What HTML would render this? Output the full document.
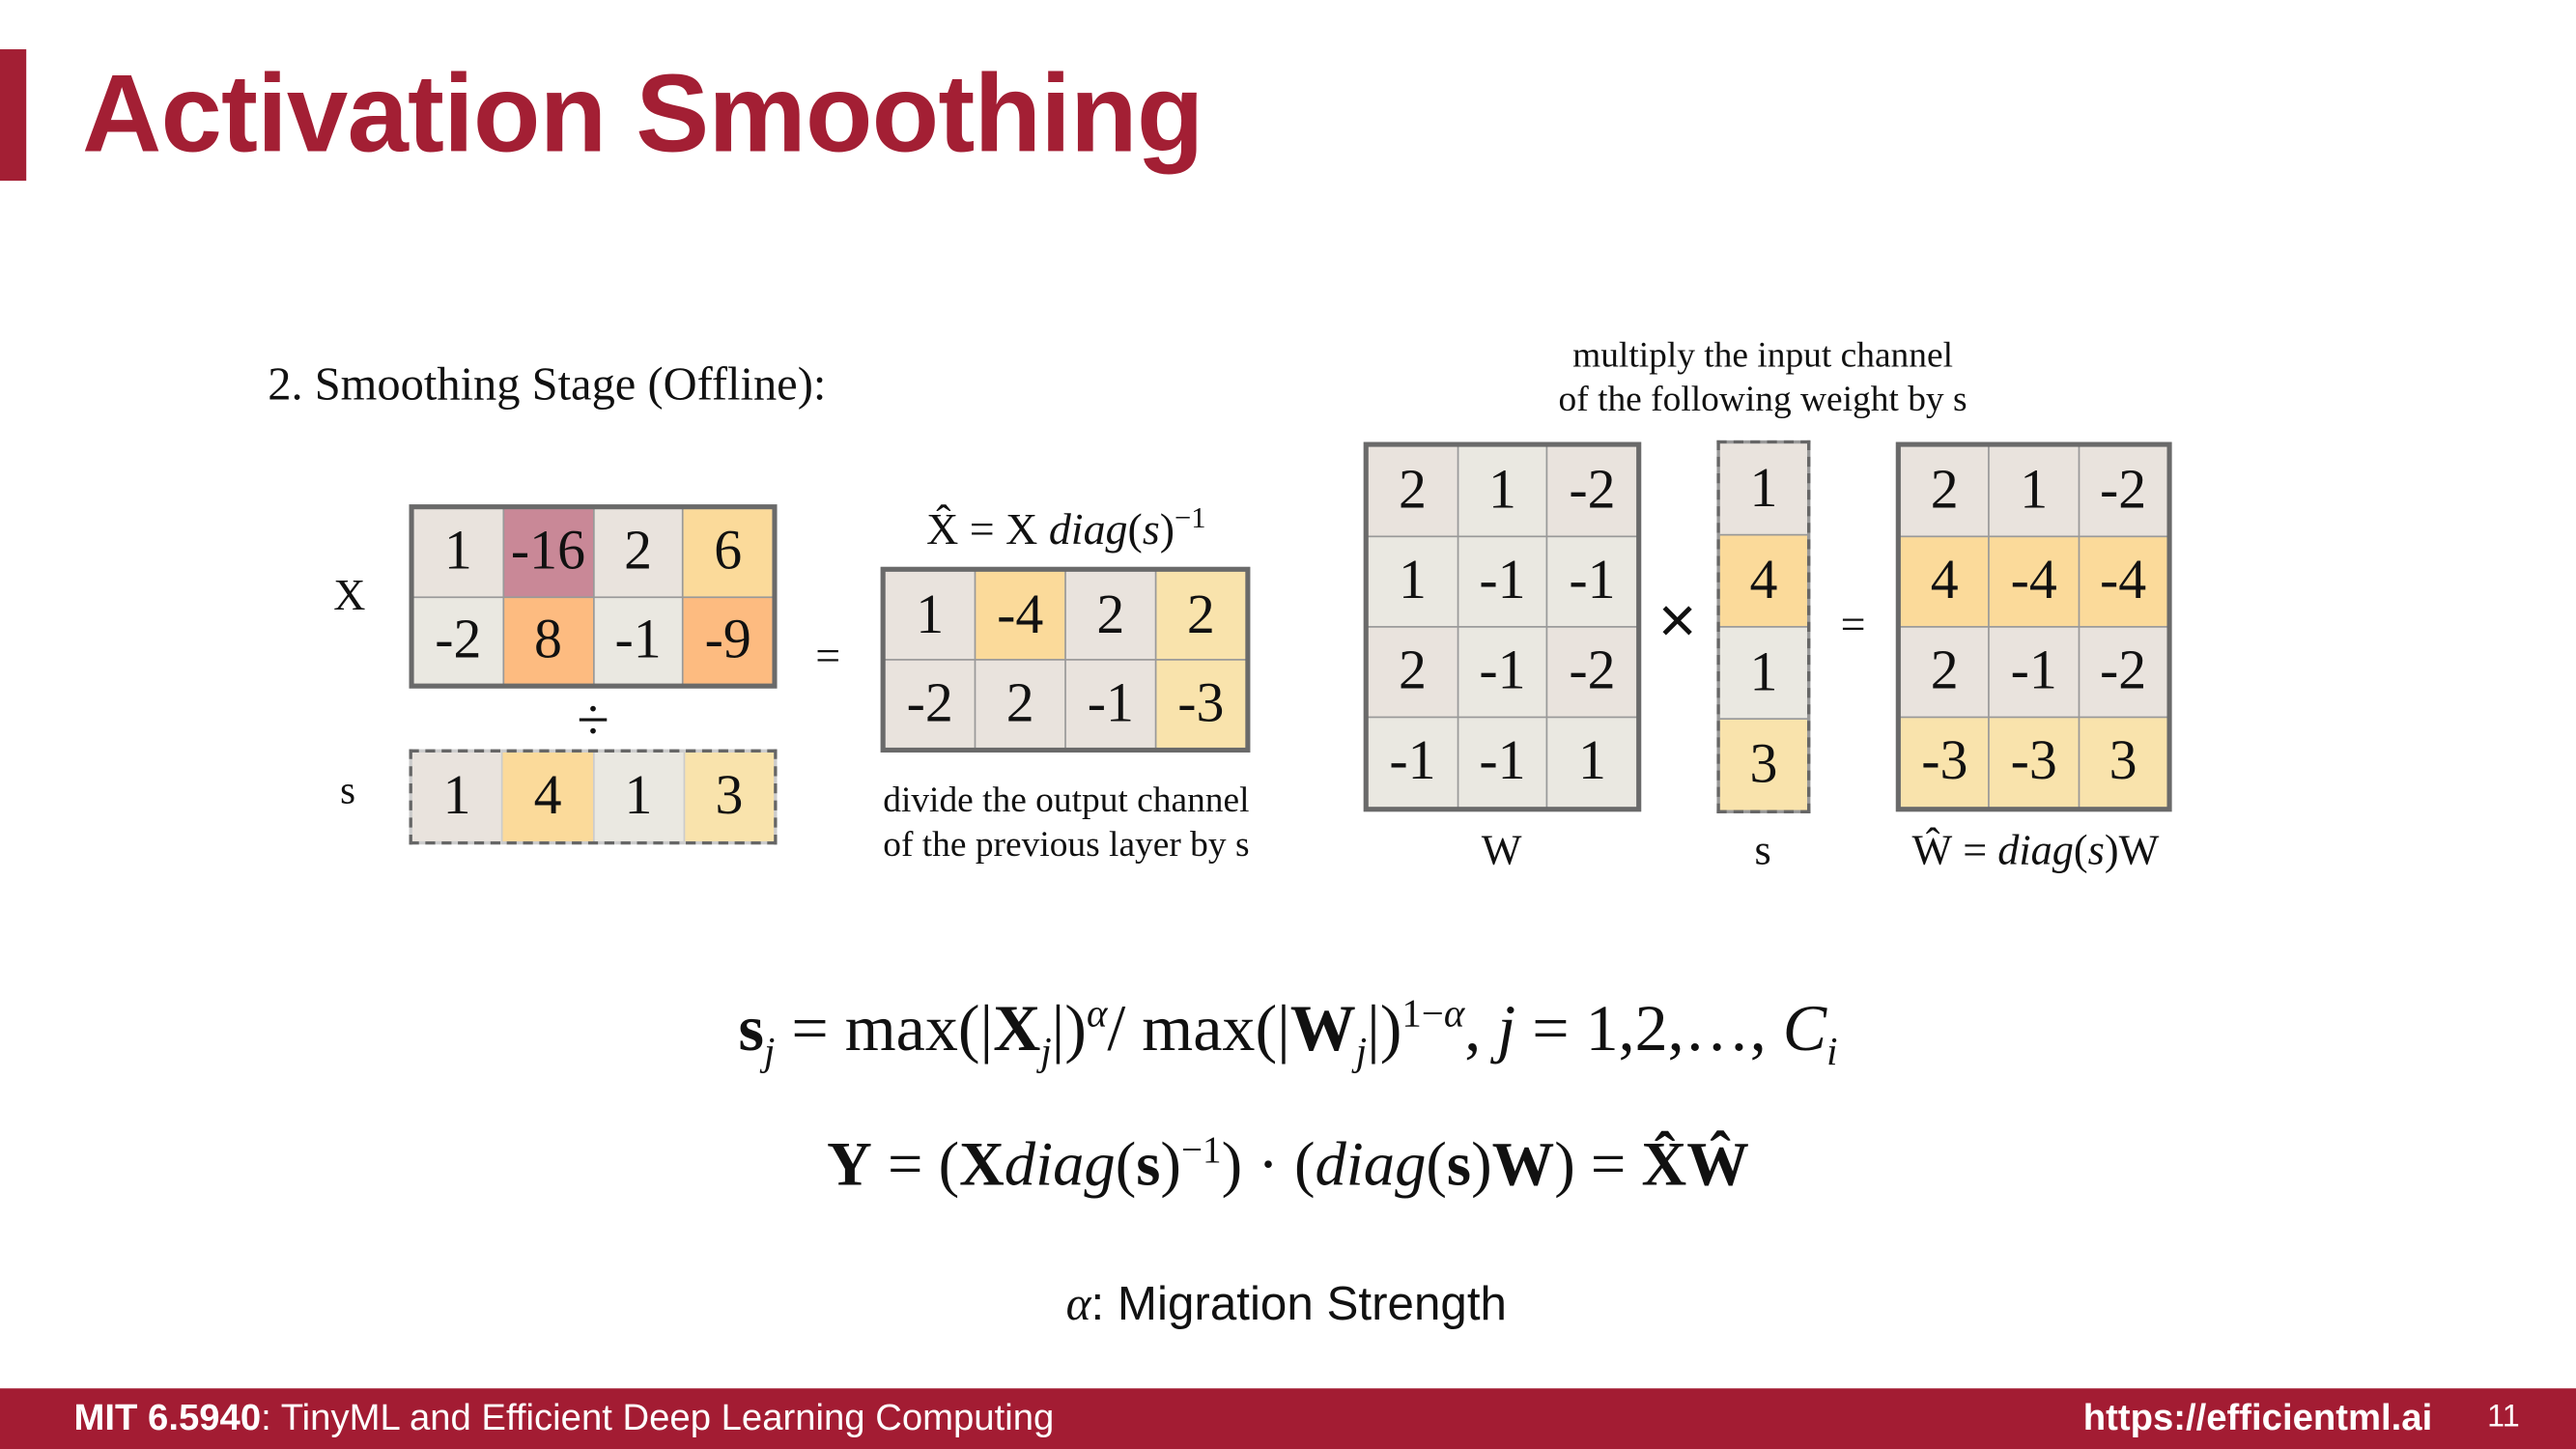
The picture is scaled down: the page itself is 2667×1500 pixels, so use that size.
<!DOCTYPE html>
<html><head><meta charset="utf-8"><style>
html,body{margin:0;padding:0;background:#fff;overflow:hidden}
#w{width:2667px;height:1500px;position:relative;overflow:hidden}
#s{position:absolute;left:0;top:0;width:1568px;height:882px;transform:scale(1.70089);transform-origin:0 0;font-family:"Liberation Serif",serif;color:#111}
.a{position:absolute;white-space:nowrap}
.m{position:absolute;display:grid;box-sizing:border-box;border:3px solid #6a6a6a;background:#999;gap:1px}
.m div{display:flex;align-items:center;justify-content:center;font-size:34px;}
.d{border:2.5px dashed #666}
.g{background:#e9e3dd}.l{background:#eae8e1}.p{background:#c98897}.o{background:#fdbb80}.y{background:#fbda9a}.yl{background:#f9e3ac}
.c{transform:translateX(-50%)}
</style></head><body><div id="w"><div id="s">
<div class="a" style="left:0;top:30px;width:16px;height:80px;background:#a31f34"></div>
<div class="a" style="left:50px;top:31px;font-family:'Liberation Sans',sans-serif;font-weight:bold;font-size:67px;color:#a31f34;letter-spacing:-0.5px">Activation Smoothing</div>

<div class="a" style="left:163px;top:219px;font-size:28.5px">2. Smoothing Stage (Offline):</div>
<div class="a" style="left:203px;top:347px;font-size:27px">X</div>
<div class="a" style="left:207px;top:469px;font-size:24px">s</div>

<div class="m" style="left:249px;top:307px;width:224px;height:112px;grid-template-columns:repeat(4,1fr);grid-template-rows:1fr 1fr">
<div class="g">1</div><div class="p">-16</div><div class="g">2</div><div class="y">6</div>
<div class="l">-2</div><div class="o">8</div><div class="l">-1</div><div class="o">-9</div></div>
<div class="a c" style="left:361px;top:417px;font-size:36px">÷</div>
<div class="m d" style="left:249px;top:456px;width:224px;height:58px;grid-template-columns:repeat(4,1fr);background:#ccc"><div class="g">1</div><div class="y">4</div><div class="l">1</div><div class="yl">3</div></div>

<div class="a c" style="left:504px;top:384px;font-size:27px">=</div>
<div class="a c" style="left:649px;top:305px;font-size:27px">X̂ = X <i>diag</i>(<i>s</i>)<sup style="font-size:18px">−1</sup></div>
<div class="m" style="left:536px;top:345px;width:225px;height:113px;grid-template-columns:repeat(4,1fr);grid-template-rows:1fr 1fr">
<div class="g">1</div><div class="y">-4</div><div class="g">2</div><div class="yl">2</div>
<div class="g">-2</div><div class="g">2</div><div class="g">-1</div><div class="yl">-3</div></div>
<div class="a c" style="left:649px;top:473px;font-size:22px;text-align:center;line-height:27px">divide the output channel<br>of the previous layer by s</div>

<div class="a c" style="left:1073px;top:202px;font-size:22px;text-align:center;line-height:27px">multiply the input channel<br>of the following weight by s</div>
<div class="m" style="left:830px;top:269px;width:169px;height:225px;grid-template-columns:repeat(3,1fr);grid-template-rows:repeat(4,1fr)">
<div class="g">2</div><div class="l">1</div><div class="g">-2</div>
<div class="l">1</div><div class="l">-1</div><div class="l">-1</div>
<div class="g">2</div><div class="l">-1</div><div class="g">-2</div>
<div class="l">-1</div><div class="l">-1</div><div class="l">1</div></div>
<div class="a c" style="left:1021px;top:356px;font-size:40px;font-family:'Liberation Sans',sans-serif;font-weight:300">×</div>
<div class="m d" style="left:1045px;top:268px;width:57px;height:227px;grid-template-rows:repeat(4,1fr);background:#999"><div class="g">1</div><div class="y">4</div><div class="l">1</div><div class="yl">3</div></div>
<div class="a c" style="left:1128px;top:365px;font-size:27px">=</div>
<div class="m" style="left:1154px;top:269px;width:168px;height:225px;grid-template-columns:repeat(3,1fr);grid-template-rows:repeat(4,1fr)">
<div class="g">2</div><div class="g">1</div><div class="g">-2</div>
<div class="y">4</div><div class="y">-4</div><div class="y">-4</div>
<div class="g">2</div><div class="g">-1</div><div class="g">-2</div>
<div class="yl">-3</div><div class="yl">-3</div><div class="yl">3</div></div>
<div class="a c" style="left:914px;top:503px;font-size:26px">W</div>
<div class="a c" style="left:1073px;top:503px;font-size:26px">s</div>
<div class="a c" style="left:1239px;top:503px;font-size:26px">Ŵ = <i>diag</i>(<i>s</i>)W</div>

<div class="a c" style="left:784px;top:602px;font-size:40px"><b>s</b><sub style="font-size:24px"><i>j</i></sub> = max(|<b>X</b><sub style="font-size:24px"><i>j</i></sub>|)<sup style="font-size:24px"><i>α</i></sup>/ max(|<b>W</b><sub style="font-size:24px"><i>j</i></sub>|)<sup style="font-size:24px">1−<i>α</i></sup>, <i>j</i> = 1,2,…, <i>C<sub style="font-size:24px">i</sub></i></div>
<div class="a c" style="left:784px;top:687px;font-size:38px"><b>Y</b> = (<b>X</b><i>diag</i>(<b>s</b>)<sup style="font-size:23px">−1</sup>) · (<i>diag</i>(<b>s</b>)<b>W</b>) = <b>X̂Ŵ</b></div>
<div class="a c" style="left:783px;top:778px;font-size:29px;font-family:'Liberation Sans',sans-serif"><i style="font-family:'Liberation Serif',serif">α</i>: Migration Strength</div>

<div class="a" style="left:0;top:845px;width:1568px;height:37px;background:#a31c33"></div>
<div class="a" style="left:45px;top:850px;font-size:22.5px;color:#fff;font-family:'Liberation Sans',sans-serif"><b>MIT 6.5940</b>: TinyML and Efficient Deep Learning Computing</div>
<div class="a" style="left:1268px;top:850px;font-size:22.5px;color:#fff;font-family:'Liberation Sans',sans-serif;font-weight:bold">https://efficientml.ai</div>
<div class="a" style="left:1514px;top:852px;font-size:19px;color:#fff;font-family:'Liberation Sans',sans-serif">11</div>
</div></div></body></html>
